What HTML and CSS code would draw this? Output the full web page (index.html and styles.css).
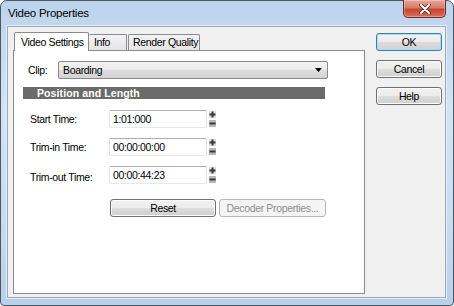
FILE: index.html
```html
<!DOCTYPE html>
<html lang="en">
<head>
    <meta charset="UTF-8">
    <title>Video Properties</title>
    <link rel="stylesheet" href="styles.css">
</head>
<body>
    <div class="window">
        <div class="titlebar">
            <span class="title">Video Properties</span>
            <button type="button" class="close" aria-label="Close">
                <svg width="12" height="10" viewBox="0 0 12 10">
                    <path d="M2 1 L10 9 M10 1 L2 9" stroke="#4b2a28" stroke-width="3.6" stroke-linecap="round"/>
                    <path d="M2 1 L10 9 M10 1 L2 9" stroke="#ffffff" stroke-width="2" stroke-linecap="round"/>
                </svg>
            </button>
        </div>
        <div class="client">
            <div class="tabbed">
                <div class="tabs">
                    <div class="tab active">Video Settings</div>
                    <div class="tab">Info</div>
                    <div class="tab">Render Quality</div>
                </div>
                <div class="panel">
                    <div class="clip-row">
                        <label class="clip-label">Clip:</label>
                        <div class="combo">
                            <span>Boarding</span>
                            <svg width="7" height="4" viewBox="0 0 7 4"><path d="M0 0 H7 L3.5 4 Z" fill="#000"/></svg>
                        </div>
                    </div>
                    <div class="section">Position and Length</div>
                    <div class="times">
                        <label>Start Time:</label>
                        <div class="field">1:01:000</div>
                        <svg class="spin" width="7" height="16" viewBox="0 0 7 16">
                            <rect x="0" y="0" width="7" height="7" fill="#dcdcdc"/>
                            <rect x="2.5" y="0.5" width="2" height="6" fill="#3a3a3a"/>
                            <rect x="0.5" y="2.5" width="6" height="2" fill="#3a3a3a"/>
                            <rect x="0" y="9" width="7" height="7" fill="#b8b8b8"/>
                            <rect x="0.5" y="11.5" width="6" height="2" fill="#3a3a3a"/>
                        </svg>
                        <label>Trim-in Time:</label>
                        <div class="field">00:00:00:00</div>
                        <svg class="spin" width="7" height="16" viewBox="0 0 7 16">
                            <rect x="0" y="0" width="7" height="7" fill="#dcdcdc"/>
                            <rect x="2.5" y="0.5" width="2" height="6" fill="#3a3a3a"/>
                            <rect x="0.5" y="2.5" width="6" height="2" fill="#3a3a3a"/>
                            <rect x="0" y="9" width="7" height="7" fill="#b8b8b8"/>
                            <rect x="0.5" y="11.5" width="6" height="2" fill="#3a3a3a"/>
                        </svg>
                        <label>Trim-out Time:</label>
                        <div class="field">00:00:44:23</div>
                        <svg class="spin" width="7" height="16" viewBox="0 0 7 16">
                            <rect x="0" y="0" width="7" height="7" fill="#dcdcdc"/>
                            <rect x="2.5" y="0.5" width="2" height="6" fill="#3a3a3a"/>
                            <rect x="0.5" y="2.5" width="6" height="2" fill="#3a3a3a"/>
                            <rect x="0" y="9" width="7" height="7" fill="#b8b8b8"/>
                            <rect x="0.5" y="11.5" width="6" height="2" fill="#3a3a3a"/>
                        </svg>
                    </div>
                    <div class="actions">
                        <button type="button" class="btn reset">Reset</button>
                        <button type="button" class="btn decoder" disabled>Decoder Properties...</button>
                    </div>
                </div>
            </div>
            <div class="side">
                <button type="button" class="btn default">OK</button>
                <button type="button" class="btn">Cancel</button>
                <button type="button" class="btn">Help</button>
            </div>
        </div>
    </div>
</body>
</html>
```

FILE: styles.css
```css
* {
    margin: 0;
    padding: 0;
    box-sizing: border-box;
}

body {
    width: 454px;
    height: 306px;
    overflow: hidden;
    font-family: "Liberation Sans", Arial, sans-serif;
    font-size: 10.5px;
    letter-spacing: -0.35px;
    color: #000;
    background: #fff;
}

.window {
    width: 454px;
    height: 306px;
    display: flex;
    flex-direction: column;
    padding: 0 7px 7px 6px;
    border: 1px solid #4d5560;
    border-radius: 7px 7px 4px 4px;
    background: linear-gradient(to bottom, #bcd3ec 0%, #d3e3f4 35%, #c9dcf0 70%, #b9d0ea 100%);
}

.titlebar {
    height: 25px;
    display: flex;
    align-items: flex-start;
    justify-content: space-between;
    padding-left: 1px;
}

.title {
    font-size: 11.5px;
    letter-spacing: -0.25px;
    line-height: 25px;
}

.close {
    width: 43px;
    height: 18px;
    margin-top: -1px;
    display: flex;
    align-items: center;
    justify-content: center;
    border: 1px solid #6b2b24;
    border-top: none;
    border-radius: 0 0 5px 5px;
    background: linear-gradient(to bottom, #e7a79b 0%, #d87a68 45%, #c7452f 55%, #d6705b 100%);
    box-shadow: inset 0 0 0 1px rgba(255, 255, 255, 0.3);
}

.client {
    flex: 1;
    display: flex;
    align-items: flex-start;
    padding: 5px 3px 0 5px;
    border: 1px solid #95a9c1;
    background: #f0f0f0;
    box-shadow: 0 0 0 1px #e4eef9;
}

.tabbed {
    width: 352px;
}

.tabs {
    height: 18px;
    display: flex;
    align-items: flex-end;
}

.tab {
    height: 16px;
    line-height: 15px;
    padding-left: 4px;
    border: 1px solid #898c95;
    border-bottom: none;
    border-radius: 2px 2px 0 0;
    background: linear-gradient(to bottom, #f3f3f3, #e4e4e4);
}

.tab.active {
    width: 75px;
    height: 19px;
    line-height: 18px;
    margin-left: 1px;
    margin-bottom: -1px;
    padding-left: 6px;
    position: relative;
    z-index: 1;
    background: #fff;
}

.tab:nth-child(2) {
    width: 38px;
    padding-left: 5px;
    border-left: none;
}

.tab:nth-child(3) {
    width: 72px;
    margin-left: 1px;
}

.panel {
    height: 244px;
    padding-left: 9px;
    border: 1px solid #898c95;
    background: #fff;
}

.clip-row {
    display: flex;
    align-items: center;
    margin-top: 10px;
    padding-left: 5px;
}

.clip-label {
    width: 30px;
}

.combo {
    width: 270px;
    height: 18px;
    display: flex;
    align-items: center;
    justify-content: space-between;
    padding: 0 5px 0 4px;
    border: 1px solid #8a8a8a;
    border-radius: 2px;
    background: linear-gradient(to bottom, #f2f2f2 0%, #ebebeb 50%, #dddddd 50%, #d3d3d3 100%);
}

.section {
    width: 302px;
    height: 12px;
    margin-top: 8px;
    padding-left: 14px;
    line-height: 12px;
    font-weight: bold;
    letter-spacing: 0.1px;
    color: #fff;
    background: #6b6b6b;
}

.times {
    display: grid;
    grid-template-columns: 77px 98px 7px;
    grid-auto-rows: 18px;
    column-gap: 2px;
    row-gap: 10px;
    align-items: center;
    margin-top: 11px;
    padding-left: 7px;
}

.times label:last-of-type {
    margin-top: 3px;
}

.field {
    height: 18px;
    line-height: 16px;
    padding-left: 3px;
    border: 1px solid #dbdfe6;
    border-top-color: #abadb3;
    border-bottom-color: #e3e9ef;
    border-radius: 2px;
    background: #fff;
}

.actions {
    display: flex;
    gap: 3px;
    margin-top: 15px;
    padding-left: 87px;
}

.btn {
    height: 18px;
    font-family: inherit;
    font-size: inherit;
    letter-spacing: inherit;
    color: #000;
    border: 1px solid #707070;
    border-radius: 3px;
    background: linear-gradient(to bottom, #f2f2f2 0%, #ebebeb 50%, #dddddd 50%, #cfcfcf 100%);
    box-shadow: inset 0 0 0 1px #fbfbfb;
}

.reset {
    width: 106px;
}

.decoder {
    width: 107px;
    color: #8f8f8f;
    border-color: #b5b8bb;
    background: #f4f4f4;
    box-shadow: none;
}

.side {
    display: flex;
    flex-direction: column;
    gap: 9px;
    margin-top: 1px;
    margin-left: 11px;
}

.side .btn {
    width: 66px;
}

.btn.default {
    border-color: #3c7fb1;
    box-shadow: inset 0 0 0 1px #a6def8;
}
```
